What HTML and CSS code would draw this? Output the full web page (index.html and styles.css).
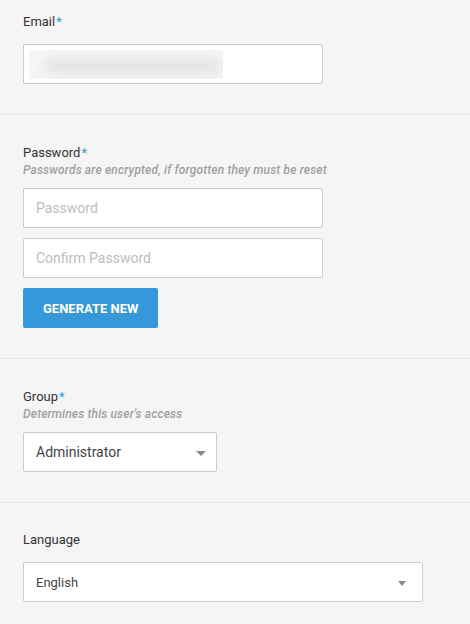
FILE: index.html
```html
<!DOCTYPE html>
<html lang="en">
<head>
<meta charset="utf-8">
<title>User</title>
<link rel="stylesheet" href="styles.css">
</head>
<body>
<div class="form">
  <section class="section first">
    <div class="label">Email<span class="req">*</span></div>
    <div class="input email">
      <div class="blur-wrap"><div class="blur-bar"></div></div>
    </div>
  </section>
  <section class="section">
    <div class="label">Password<span class="req">*</span></div>
    <div class="note">Passwords are encrypted, if forgotten they must be reset</div>
    <div class="stack">
      <div class="input"><span class="placeholder">Password</span></div>
      <div class="input"><span class="placeholder">Confirm Password</span></div>
      <button class="btn">Generate New</button>
    </div>
  </section>
  <section class="section">
    <div class="label">Group<span class="req">*</span></div>
    <div class="note">Determines this user's access</div>
    <div class="select group">
      <span class="value">Administrator</span>
      <span class="caret"></span>
    </div>
  </section>
  <section class="section last">
    <div class="label">Language</div>
    <div class="select lang">
      <span class="value">English</span>
      <span class="caret small"></span>
    </div>
  </section>
</div>
</body>
</html>
```

FILE: styles.css
```css
* { box-sizing: border-box; }
html, body {
  margin: 0;
  padding: 0;
  background: #f5f5f5;
  font-family: Roboto, "Liberation Sans", Arial, sans-serif;
  color: #333;
}
.form {
  display: flex;
  flex-direction: column;
}
.section {
  padding: 30px 23px;
  border-bottom: 1px solid #e6e6e6;
  display: flex;
  flex-direction: column;
  align-items: flex-start;
}
.section.first { padding-top: 14px; }
.section.last { padding-top: 29px; }
.label {
  font-size: 13px;
  line-height: 16px;
  color: #333;
  margin-bottom: 14px;
}
.req { color: #3498db; margin-left: 1px; }
.note {
  font-size: 12px;
  line-height: 16px;
  font-style: italic;
  font-weight: 500;
  letter-spacing: 0.15px;
  color: #a0a0a0;
  margin-top: -13px;
  margin-bottom: 10px;
}
.stack {
  display: flex;
  flex-direction: column;
  gap: 10px;
  align-items: flex-start;
}
.input, .select {
  width: 300px;
  height: 40px;
  background: #fff;
  border: 1px solid #cccccc;
  border-radius: 2px;
  display: flex;
  align-items: center;
  padding: 0 12px;
  font-size: 14px;
}
.email { padding: 4px 5px; }
.blur-wrap {
  width: 194px;
  height: 29px;
  overflow: hidden;
  background: #f6f6f6;
  position: relative;
}
.blur-bar {
  margin: 9px 0 0 16px;
  width: 176px;
  height: 14px;
  background: #e2e2e2;
  filter: blur(6px);
}
.placeholder { color: #bdbdbd; }
.btn {
  height: 40px;
  padding: 0 20px;
  background: #3498db;
  color: #fff;
  border: none;
  border-radius: 2px;
  font-family: Roboto, "Liberation Sans", Arial, sans-serif;
  font-size: 13px;
  font-weight: 700;
  text-transform: uppercase;
}
.select { justify-content: space-between; padding-right: 10px; }
.select .value { color: #444; }
.group { width: 194px; }
.lang { width: 400px; font-size: 13px; padding-right: 16px; }
.caret {
  width: 0;
  height: 0;
  border-left: 5px solid transparent;
  border-right: 5px solid transparent;
  border-top: 5px solid #8a8a8a;
  margin-top: 2px;
}
.caret.small {
  border-left-width: 4px;
  border-right-width: 4px;
  border-top-width: 5px;
}
```
